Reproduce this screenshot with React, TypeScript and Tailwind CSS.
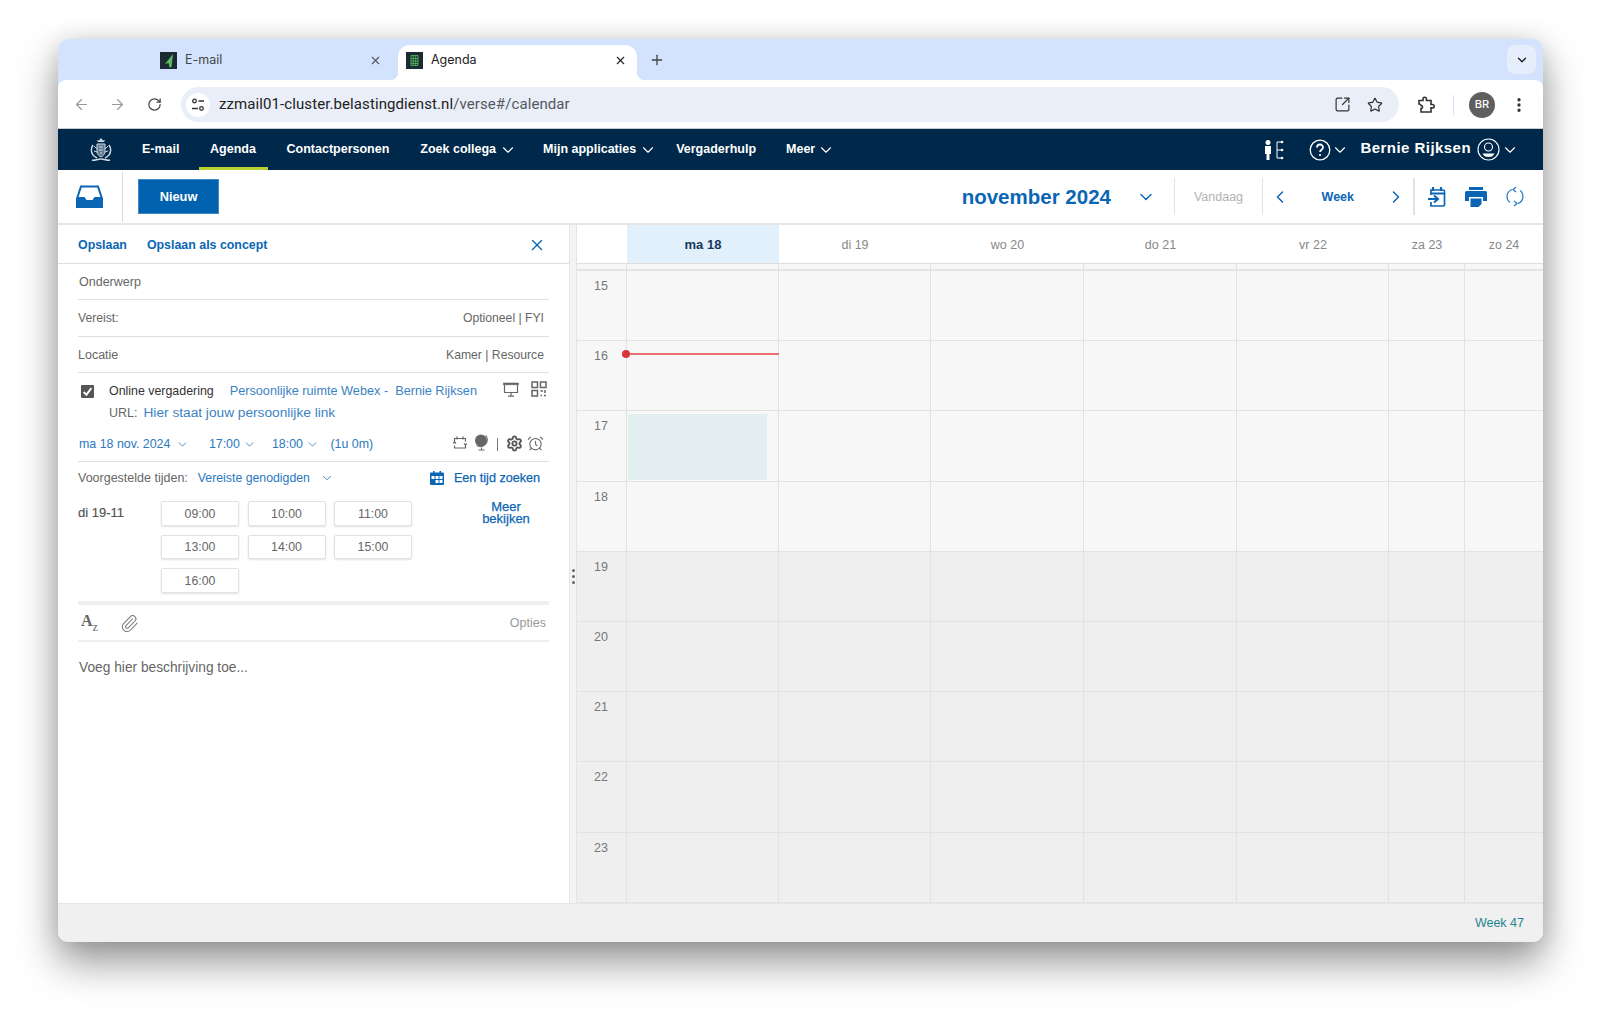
import React from "react";
import { ArrowLeft, ArrowRight, RotateCw, SquareArrowOutUpRight, Star, ChevronDown, ChevronLeft, ChevronRight, X, Plus, EllipsisVertical, Settings, AlarmClock, Paperclip } from "lucide-react";

const days = [
  { label: "ma 18", today: true },
  { label: "di 19" },
  { label: "wo 20" },
  { label: "do 21" },
  { label: "vr 22" },
  { label: "za 23" },
  { label: "zo 24" },
];
const hours = [15, 16, 17, 18, 19, 20, 21, 22, 23];
const slots = ["09:00", "10:00", "11:00", "13:00", "14:00", "15:00", "16:00"];
const gridCols = "grid grid-cols-[49px_152px_152px_153px_153px_152px_76px_1fr]";
const headCols = "grid grid-cols-[50px_152px_152px_153px_153px_152px_76px_1fr]";

function Chev({ className }: { className: string }) {
  return <ChevronDown className={className} strokeWidth={1.5} />;
}

function Logo() {
  return (
    <svg width="22" height="26" viewBox="0 0 22 26" fill="none" stroke="#cfd8e0" strokeWidth="1">
      <path d="M8 5h6l1-2-2 .5L11 1 9 3.500 7 3z" fill="#cfd8e0" stroke="none" />
      <path d="M7 7h8v8c0 2-2 4-4 5-2-1-4-3-4-5z" fill="#5f7a90" />
      <path d="M3 8c-2 3-2 7 0 10 1 1 2 2 4 3M19 8c2 3 2 7 0 10-1 1-2 2-4 3" strokeWidth="1.5" />
      <path d="M4 9l3 3M18 9l-3 3M4 14l3 1M18 14l-3 1" />
      <path d="M2 23c3 1 5-1 9-1s6 2 9 1" strokeWidth="1.6" />
      <path d="M9 10h4M9 13h4M10 16h2" />
    </svg>
  );
}

function Row({ children, className }: { children: React.ReactNode; className: string }) {
  return <div className={"flex items-center border-b border-[#dedede] " + className}>{children}</div>;
}

export default function App() {
  return (
    <div className="w-[1600px] h-[1018px] bg-white pt-[39px] pl-[58px] overflow-hidden font-['Liberation_Sans',sans-serif]">
      <div className="w-[1485px] h-[903px] flex flex-col rounded-[10px] overflow-hidden shadow-[0_20px_40px_rgba(0,0,0,0.42),0_0_22px_rgba(0,0,0,0.1)] bg-white">
        {/* Tab strip */}
        <div className="h-[41px] bg-[#d3e3fd] flex items-end font-['Inter',sans-serif] text-[12.500px] text-[#333]">
          <div className="h-[35px] pb-[5px] flex items-center w-[340px] pl-[102px]">
            <svg width="17" height="17" viewBox="0 0 17 17"><rect width="17" height="17" fill="#1c2b33" /><path d="M13 2 5 12l3.500-1L9.500 15.500l2-.5z" fill="#5dbb63" /></svg>
            <span className="ml-[8px] text-[#444]">E-mail</span>
            <X className="w-[13px] h-[13px] ml-auto mr-[16px] text-[#555]" strokeWidth={2} />
          </div>
          <div className="relative h-[35px] pb-[5px] w-[239px] bg-white rounded-t-[12px] flex items-center pl-[8px]">
            <div className="absolute -left-[8px] bottom-0 w-[8px] h-[8px] bg-[radial-gradient(circle_at_0_0,transparent_8px,white_8.500px)]" />
            <div className="absolute -right-[8px] bottom-0 w-[8px] h-[8px] bg-[radial-gradient(circle_at_100%_0,transparent_8px,white_8.500px)]" />
            <svg width="17" height="17" viewBox="0 0 17 17"><rect width="17" height="17" fill="#1c2b33" /><path d="M5 3.500h7v10H5zM5 6.500h7M5 9h7M5 11.500h7M7.300 3.500v10M9.700 3.500v10" fill="none" stroke="#4fb35a" strokeWidth="0.9" /></svg>
            <span className="ml-[8px] text-[#222]">Agenda</span>
            <X className="w-[13px] h-[13px] ml-auto mr-[10px] text-[#222]" strokeWidth={2} />
          </div>
          <div className="h-[35px] pb-[5px] flex items-center ml-[12px]">
            <Plus className="w-[16px] h-[16px] text-[#444]" strokeWidth={2} />
          </div>
          <div className="ml-auto mr-[7px] mb-[6px] w-[29px] h-[29px] rounded-[8px] bg-[#e6eefb] flex items-center justify-center">
            <ChevronDown className="w-[14px] h-[14px] text-[#222]" strokeWidth={2.4} />
          </div>
        </div>

        {/* Browser toolbar */}
        <div className="bg-[#d3e3fd]">
          <div className="h-[49px] pt-[1px] bg-white flex items-center border-b border-[#c9ccd1] rounded-t-[8px] text-[#444]">
            <ArrowLeft className="w-[17px] h-[17px] ml-[15px] text-[#9a9a9a]" strokeWidth={1.7} />
            <ArrowRight className="w-[17px] h-[17px] ml-[19px] text-[#9a9a9a]" strokeWidth={1.7} />
            <RotateCw className="w-[15px] h-[15px] ml-[21px] text-[#444]" strokeWidth={2} />
            <div className="ml-[19px] w-[1218px] h-[35px] rounded-full bg-[#e9eef8] flex items-center pl-[5px]">
              <div className="w-[24px] h-[24px] rounded-full bg-white flex items-center justify-center">
                <svg width="14" height="14" viewBox="0 0 14 14" fill="none" stroke="#333" strokeWidth="1.300"><circle cx="3.500" cy="3" r="1.800" /><path d="M7.500 3H13M1 10.500h6" /><circle cx="10.500" cy="10.500" r="1.800" /></svg>
              </div>
              <span className="ml-[9px] text-[15px] tracking-[0.006em] text-[#222] font-['Roboto',sans-serif]">
                zzmail01-cluster.belastingdienst.nl<span className="text-[#55595e]">/verse#/calendar</span>
              </span>
              <SquareArrowOutUpRight className="w-[17px] h-[17px] ml-auto text-[#333]" strokeWidth={1.7} />
              <Star className="w-[16px] h-[16px] ml-[16px] mr-[16px] text-[#333]" strokeWidth={1.8} />
            </div>
            <svg className="ml-[18px]" width="18" height="18" viewBox="0 0 18 18" fill="none" stroke="#333" strokeWidth="1.600"><path d="M2 4.500h4V3a1.700 1.700 0 0 1 3.400 0v1.500H14v4h1.500a1.700 1.700 0 0 1 0 3.400H14V16H4v-3.500a1.500 1.500 0 0 0 0-3A2 2 0 0 0 2 8z" /></svg>
            <div className="ml-[18px] w-px h-[20px] bg-[#d3e3fd]" />
            <div className="ml-[15px] w-[26px] h-[26px] rounded-full bg-[#5f5f5f] flex items-center justify-center text-white text-[11px] font-['Inter',sans-serif] font-medium">BR</div>
            <EllipsisVertical className="w-[18px] h-[18px] ml-[15px] text-[#333]" strokeWidth={2.4} />
          </div>
        </div>

        {/* App nav */}
        <div className="h-[41px] bg-[#00284a] flex items-center text-white text-[12.500px] font-bold">
          <div className="ml-[32px]"><Logo /></div>
          <span className="ml-[30px]">E-mail</span>
          <div className="ml-[19px] self-stretch w-[69px] border-y-[3px] border-t-transparent border-b-[#b9d130] flex items-center justify-center">Agenda</div>
          <span className="ml-[19px]">Contactpersonen</span>
          <span className="ml-[31px]">Zoek collega</span>
          <Chev className="w-[18px] h-[18px] ml-[3px]" />
          <span className="ml-[26px]">Mijn applicaties</span>
          <Chev className="w-[18px] h-[18px] ml-[3px]" />
          <span className="ml-[19px]">Vergaderhulp</span>
          <span className="ml-[30px]">Meer</span>
          <Chev className="w-[18px] h-[18px] ml-[2px]" />
          <svg className="ml-auto" width="20" height="22" viewBox="0 0 20 22" fill="none"><circle cx="4" cy="3.500" r="2.500" fill="#fff" /><path d="M1 7h6v8H5.500v6h-3v-6H1z" fill="#fff" /><path d="M13 3v16M13 3h4M13 11h4M13 19h4" stroke="#fff" strokeWidth="1" /><circle cx="18" cy="3" r="1.300" fill="#fff" /><circle cx="18" cy="11" r="1.300" fill="#fff" /><circle cx="18" cy="19" r="1.300" fill="#fff" /></svg>
          <svg className="ml-[24.500px]" width="22" height="22" viewBox="0 0 22 22" fill="none" stroke="#fff"><circle cx="11" cy="11" r="9.800" strokeWidth="1.300" /><path d="M8 8.500A3 3 0 0 1 14 8.500c0 2-3 2.500-3 4.500" strokeWidth="1.800" /><circle cx="11" cy="16" r="1.100" fill="#fff" stroke="none" /></svg>
          <Chev className="w-[18px] h-[18px] ml-[0.500px]" />
          <span className="ml-[11px] text-[15px] tracking-[0.03em] -mt-[2px]">Bernie Rijksen</span>
          <svg className="ml-[6px]" width="23" height="23" viewBox="0 0 23 23" fill="none" stroke="#fff"><circle cx="11.500" cy="11.500" r="10.500" strokeWidth="1.100" /><circle cx="11.500" cy="9" r="4" strokeWidth="1.100" /><path d="M5.500 15.500h12c-1 2.500-3 3.500-6 3.500s-5-1-6-3.500z" fill="#fff" stroke="none" /></svg>
          <Chev className="w-[18px] h-[18px] ml-[1px] mr-[24px]" />
        </div>

        {/* Action bar */}
        <div className="h-[55px] flex items-center border-b-2 border-[#e6e6e6] text-[#0a66b5]">
          <svg className="ml-[18px]" width="27" height="23" viewBox="0 0 27 23"><path d="M5 1.500h17l3.800 11.500H19l-2 3h-7l-2-3H1.200z" fill="none" stroke="#0a66b5" strokeWidth="2" /><path d="M0 13h8l2 3h7l2-3h8v10H0z" fill="#0a66b5" /></svg>
          <div className="ml-[19px] w-px h-[50px] bg-[#dcdcdc]" />
          <div className="ml-[15px] w-[81px] h-[35px] pt-[1px] bg-[#0061ae] border border-[#3f8bc9] flex items-center justify-center text-white text-[12.800px] font-bold">Nieuw</div>
          <span className="ml-auto mt-[2px] text-[20.500px] font-bold">november 2024</span>
          <ChevronDown className="ml-[25.500px] w-[20px] h-[20px]" strokeWidth={1.7} />
          <div className="ml-[18px] w-px h-[37px] bg-[#e2e2e2]" />
          <span className="ml-[18.500px] mt-[1px] text-[12.500px] text-[#b3b3b3]">Vandaag</span>
          <div className="ml-[18.500px] w-px h-[37px] bg-[#e2e2e2]" />
          <ChevronLeft className="ml-[7px] w-[20px] h-[20px]" strokeWidth={1.8} />
          <span className="ml-[32px] mt-[1px] text-[12.500px] font-bold">Week</span>
          <ChevronRight className="ml-[32px] w-[20px] h-[20px]" strokeWidth={1.8} />
          <div className="ml-[7px] w-[2px] h-[37px] bg-[#e2e2e2]" />
          <svg className="ml-[13px]" width="18" height="20" viewBox="0 0 18 20" fill="none" stroke="#0a66b5" strokeWidth="1.700"><path d="M5 0v4M13 0v4" strokeWidth="2.200" /><path d="M3 8V3h12a1.500 1.500 0 0 1 1.500 1.500V17.500a1.500 1.500 0 0 1-1.500 1.500H3v-4" /><path d="M3 6.500h13" strokeWidth="2" /><path d="M0 12h9M6 8.500 10 12l-4 3.500" strokeWidth="2" /></svg>
          <svg className="ml-[19px]" width="22" height="20" viewBox="0 0 22 20"><rect x="4" y="0" width="14" height="3" fill="#0a66b5" /><path d="M1.500 4h19a1.500 1.500 0 0 1 1.500 1.500V14h-4V10H4v4H0V5.500A1.500 1.500 0 0 1 1.500 4z" fill="#0a66b5" /><path d="M5.500 11.500h11V17l-3 3h-8z" fill="#0a66b5" /></svg>
          <svg className="ml-[18px] mr-[18px]" width="20" height="21" viewBox="0 0 20 21" fill="none" stroke="#2a7fc6" strokeWidth="1.300"><path d="M7 3.500A7.500 7.500 0 0 0 5 16.500M13 17.500A7.500 7.500 0 0 0 15 4.500" /><path d="M11 1 8 3.500l3 2.500M9 20l3-2.500L9 15" /></svg>
        </div>

        {/* Main */}
        <div className="flex-1 flex min-h-0">
          {/* Left editor panel */}
          <div className="w-[511px] flex flex-col bg-white text-[12.500px] text-[#666]">
            <div className="h-[39px] pt-[2px] flex items-center border-b border-[#dedede] pl-[20px] pr-[23px] text-[12.400px] text-[#0a66b5] font-bold">
              <span>Opslaan</span>
              <span className="ml-[20px]">Opslaan als concept</span>
              <X className="ml-auto w-[18px] h-[18px]" strokeWidth={1.8} />
            </div>
            <div className="px-[20px] flex flex-col">
              <Row className="h-[36px] pt-[1px] pl-px">Onderwerp</Row>
              <Row className="h-[37px] pt-[1px] justify-between pr-[5px] text-[12.200px]"><span>Vereist:</span><span>Optioneel | FYI</span></Row>
              <Row className="h-[36px] pt-[2px] justify-between pr-[5px]"><span>Locatie</span><span className="text-[12.200px]">Kamer | Resource</span></Row>
              <div className="h-[21px] mt-[8px] flex items-center">
                <div className="ml-[3px] w-[13px] h-[13px] bg-[#555] rounded-[1px] flex items-center justify-center">
                  <svg width="11" height="11" viewBox="0 0 10 10" fill="none" stroke="#fff" strokeWidth="1.800"><path d="M1.500 5.500 4 8l4.500-6" /></svg>
                </div>
                <span className="ml-[15px] text-[12.400px] text-[#333]">Online vergadering</span>
                <span className="ml-[16px] text-[12.700px] text-[#3b82c4]">Persoonlijke ruimte Webex -&nbsp; Bernie Rijksen</span>
                <svg className="ml-auto -mt-[5px]" width="16" height="15" viewBox="0 0 16 15" fill="none" stroke="#666"><rect x="0.500" y="1" width="15" height="1.800" fill="#666" strokeWidth="0.600" /><path d="M1.500 3v7.500h13V3M8 10.500V14M5 14.200h6" strokeWidth="1.200" /></svg>
                <svg className="ml-[12px] mr-[2px] -mt-[5px]" width="16" height="16" viewBox="0 0 16 16" fill="none" stroke="#666" strokeWidth="1.500"><rect x="1" y="1" width="5.500" height="5.500" /><rect x="9.500" y="1" width="5.500" height="5.500" /><rect x="1" y="9.500" width="5.500" height="5.500" /><path d="M9.500 10h2.500M14 9v3M9.500 14.500h1.500M13 14.500h2" /></svg>
              </div>
              <div className="h-[22px] flex items-center pl-[31px]">
                <span>URL:</span>
                <span className="ml-[6px] text-[13.700px] text-[#3b82c4]">Hier staat jouw persoonlijke link</span>
              </div>
              <Row className="h-[38px] pt-[3px] text-[12.400px] text-[#2a78bf]">
                <span className="ml-px">ma 18 nov. 2024</span>
                <Chev className="w-[13px] h-[13px] ml-[5.500px]" />
                <span className="ml-[20px]">17:00</span>
                <Chev className="w-[13px] h-[13px] ml-[3.500px]" />
                <span className="ml-[15.500px]">18:00</span>
                <Chev className="w-[13px] h-[13px] ml-[3.500px]" />
                <span className="ml-[11px]">(1u 0m)</span>
                <svg className="ml-auto -mt-[2px]" width="14" height="14" viewBox="0 0 14 14" fill="none" stroke="#666" strokeWidth="1.200"><path d="M4 .5v3M10 .5v3M1.500 7V2.500h11v3M12.500 9v3h-11V9.500" /><path d="M0 7.500l1.500-1.500 1.500 1.500M11 7.500l1.500 1.500L14 7.500" /></svg>
                <svg className="ml-[7px] -mt-[3px]" width="15" height="17" viewBox="0 0 15 17" fill="none"><circle cx="7" cy="6.500" r="6" fill="#666" /><path d="M12 1.500a7 7 0 0 1-9.500 10M7.500 13.500V16M4.500 16h6" stroke="#666" strokeWidth="1" /></svg>
                <div className="ml-[8px] w-px h-[13px] bg-[#777]" />
                <Settings className="ml-[8px] -mt-[1px] w-[17px] h-[17px] text-[#555]" strokeWidth={2.6} />
                <AlarmClock className="ml-[4px] mr-[5px] -mt-[2px] w-[17px] h-[17px] text-[#666]" strokeWidth={1.5} />
              </Row>
              <div className="h-[32px] flex items-center">
                <span>Voorgestelde tijden:</span>
                <span className="ml-[10px] text-[12.300px] text-[#2a78bf]">Vereiste genodigden</span>
                <Chev className="w-[14px] h-[14px] ml-[10px] text-[#2a78bf]" />
                <svg className="ml-auto" width="14" height="14" viewBox="0 0 14 14"><path d="M3 0h1.500v1.500h5V0H11v1.500h2a1 1 0 0 1 1 1V13a1 1 0 0 1-1 1H1a1 1 0 0 1-1-1V2.500a1 1 0 0 1 1-1h2z" fill="#0a66b5" /><path d="M1.500 5h3v3h-3zM5.500 5h3v3h-3zM9.500 5h3v3h-3zM5.500 9h3v3h-3zM9.500 9h3v3h-3z" fill="#fff" /></svg>
                <span className="ml-[9.500px] mr-[9px] text-[12.600px] font-medium text-[#0a66b5] [-webkit-text-stroke:0.25px_#0a66b5]">Een tijd zoeken</span>
              </div>
              <div className="flex mt-[7px]">
                <span className="w-[83px] leading-[24px] text-[13px] text-[#555] [-webkit-text-stroke:0.2px_#555]">di 19-11</span>
                <div className="grid grid-cols-[78px_78px_78px] gap-x-[8.500px] gap-y-[9px]">
                  {slots.map((s) => (
                    <div key={s} className="h-[24.500px] pt-[1px] flex items-center justify-center bg-white border border-[#e2e2e2] rounded-[2px] text-[12.300px] shadow-[0_1px_2px_rgba(0,0,0,0.12)]">{s}</div>
                  ))}
                </div>
                <div className="ml-[54px] w-[80px] text-center text-[13px] leading-[12px] text-[#0a66b5] [-webkit-text-stroke:0.25px_#0a66b5]">Meer<br />bekijken</div>
              </div>
              <div className="h-[4px] mt-[8.500px] bg-[#efefef]" />
              <div className="h-[37px] pt-[1px] flex items-center border-b-2 border-[#eeeeee]">
                <span className="ml-[3px] text-[#666] font-['Liberation_Serif',serif] font-bold text-[16px] leading-none">A<span className="text-[12px] font-normal align-[-5px]">z</span></span>
                <Paperclip className="ml-[22px] w-[19px] h-[19px] text-[#777]" strokeWidth={1.3} />
                <span className="ml-auto mr-[3px] text-[#999]">Opties</span>
              </div>
              <div className="pt-[16px] pl-px text-[13.750px] leading-[20px] text-[#666]">Voeg hier beschrijving toe...</div>
            </div>
          </div>

          {/* Gutter */}
          <div className="w-[8px] bg-[#f3f3f3] border-x border-[#e4e4e4] flex flex-col items-center justify-center gap-[3px] pt-[25px]">
            <div className="w-[3px] h-[3px] rounded-full bg-[#666]" />
            <div className="w-[3px] h-[3px] rounded-full bg-[#666]" />
            <div className="w-[3px] h-[3px] rounded-full bg-[#666]" />
          </div>

          {/* Calendar */}
          <div className="flex-1 flex flex-col min-w-0 text-[12.500px]">
            <div className={headCols + " h-[39px] border-b border-[#dedede] bg-white"}>
              <div />
              {days.map((d) => (
                <div key={d.label} className={d.today ? "flex items-center justify-center pt-[1px] bg-[#e1f0fb] text-[13px] font-bold text-[#17395c]" : "flex items-center justify-center pt-[2px] text-[#888]"}>{d.label}</div>
              ))}
            </div>
            <div className={gridCols + " h-[7px] border-b-2 border-[#e4e4e4] bg-[#f7f7f7]"}>
              <div />
              {days.map((d) => (<div key={d.label} className="border-l border-[#e2e2e2]" />))}
            </div>
            <div className="relative flex flex-col">
              {hours.map((h) => (
                <div key={h} className={gridCols + " h-[70.200px] border-b border-[#e2e2e2] " + (h < 19 ? "bg-[#f7f7f7]" : "bg-[#efefef]")}>
                  <div className="text-center pt-[6px] pr-[1px] text-[#777] leading-[18px]">{h}</div>
                  {days.map((d) => (<div key={d.label} className="border-l border-[#e2e2e2]" />))}
                </div>
              ))}
              {/* Selected slot, over the grid */}
              <div className="absolute left-[51px] top-[143px] w-[139px] h-[66px] bg-[#e3eff0]" />
              {/* Now indicator, over the grid */}
              <div className="absolute left-[49px] top-[82px] w-[153px] h-[2px] bg-[#e86f72]" />
              <div className="absolute left-[45px] top-[79px] w-[8px] h-[8px] rounded-full bg-[#d9343a]" />
            </div>
          </div>
        </div>

        {/* Footer */}
        <div className="h-[39px] bg-[#f0f0f0] border-t border-[#e6e6e6] flex items-center justify-end pr-[19px] text-[12.500px] text-[#1f8590] shrink-0">Week 47</div>
      </div>
    </div>
  );
}
